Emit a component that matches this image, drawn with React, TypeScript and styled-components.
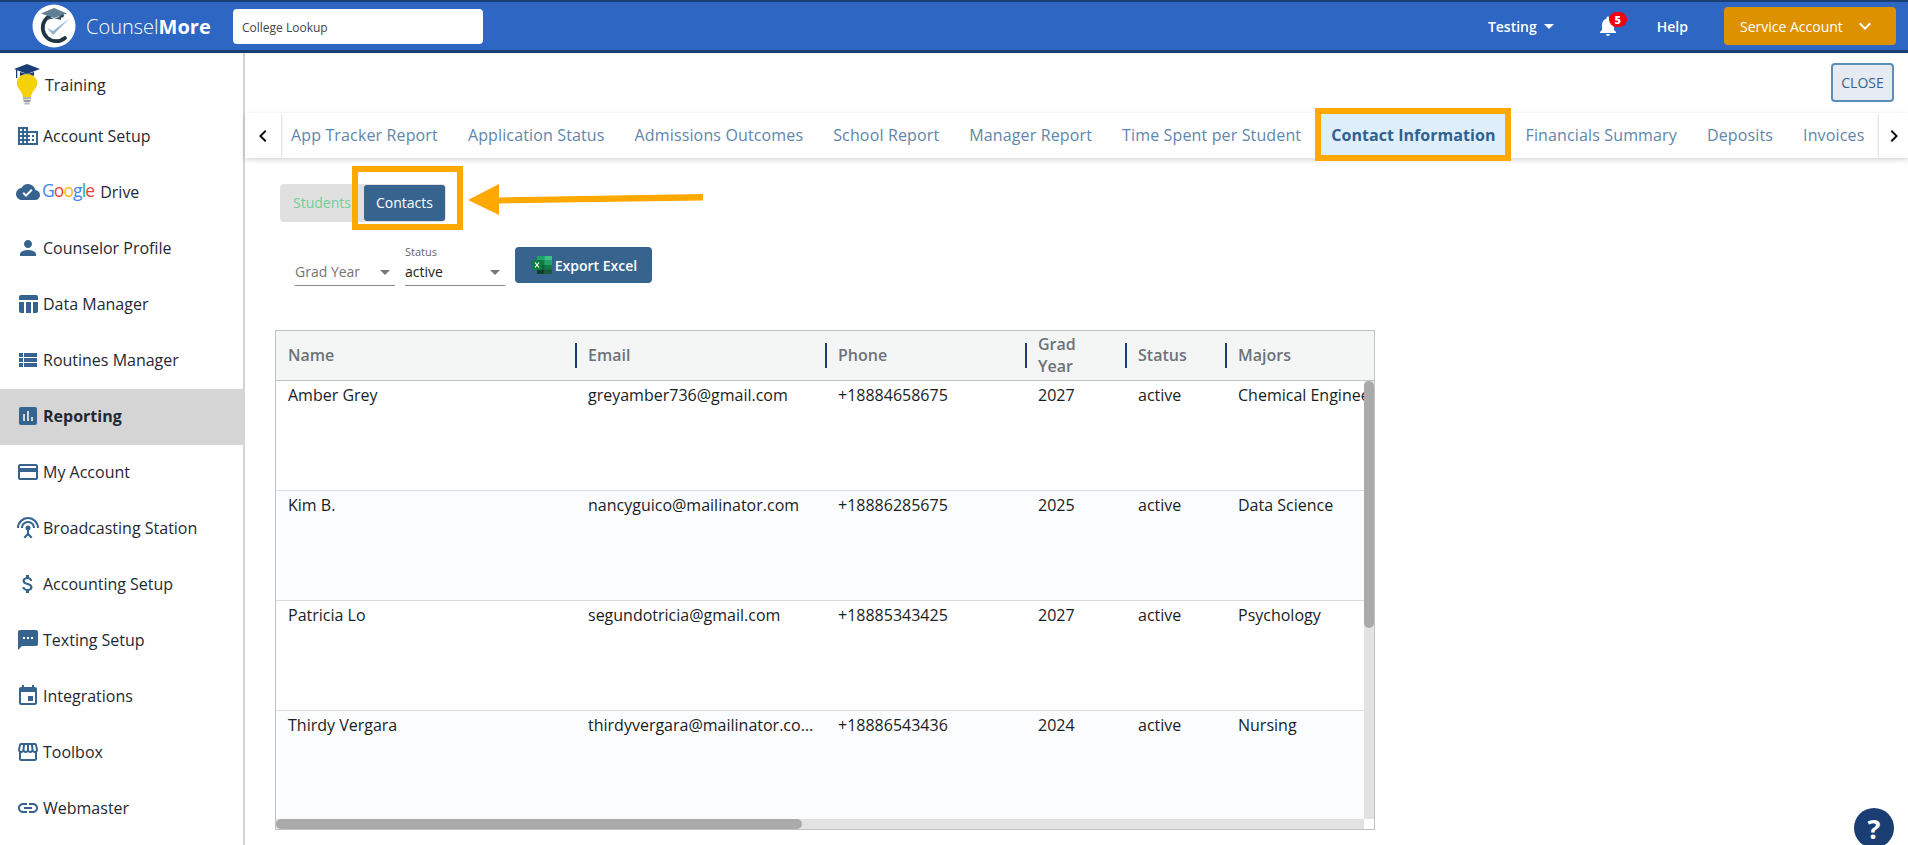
import React from "react";
import styled, { createGlobalStyle } from "styled-components";
import {
  MdDomain, MdCloudDone, MdPerson, MdTableChart, MdViewList, MdAssessment, MdPayment,
  MdSettingsInputAntenna, MdAttachMoney, MdSms, MdEvent, MdStorefront, MdLink,
  MdNotifications, MdChevronLeft, MdChevronRight, MdKeyboardArrowDown,
} from "react-icons/md";

const Global = createGlobalStyle`
  html, body { margin: 0; padding: 0; height: 100%; background: #fff; overflow: hidden; }
  body { font-family: "Open Sans", "Liberation Sans", sans-serif; }
  * { box-sizing: border-box; }
`;

const Page = styled.div`
  width: 1908px; height: 845px; display: flex; flex-direction: column; overflow: hidden; position: relative;
`;
const Header = styled.header`
  height: 53px; flex: none; display: flex; align-items: center; background: #2d66c3;
  border-top: 2px solid #1a3e73; border-bottom: 3px solid #1a3e73; color: #fff; padding: 0 12px 0 33px;
`;
const LogoSvg = styled.svg`width: 44px; height: 44px; flex: none; margin-left: -1px;`;
const Brand = styled.div`
  font-size: 20px; font-weight: 300; margin-left: 10px; width: 147px; flex: none;
  b { font-weight: 700; }
`;
const Search = styled.div`
  width: 250px; height: 35px; background: #fff; border-radius: 4px; color: #444; font-size: 12px;
  display: flex; align-items: center; padding: 3px 9px 0;
`;
const RightNav = styled.div`display: flex; align-items: center; margin-left: auto; font-size: 14px; font-weight: 600;`;
const Testing = styled.div`display: flex; align-items: center; gap: 7px;`;
const Caret = styled.span<{ $c?: string; $w?: number }>`
  width: 0; height: 0; border-left: ${p => p.$w ?? 5}px solid transparent; border-right: ${p => p.$w ?? 5}px solid transparent;
  border-top: ${p => p.$w ?? 5}px solid ${p => p.$c ?? "#fff"};
`;
const BellWrap = styled.div`position: relative; display: flex; margin-left: 42px; margin-right: 37px; font-size: 24px;`;
const Badge = styled.span`
  position: absolute; top: -2px; right: -7px; width: 18px; height: 15px; border-radius: 8px; background: #f5000f;
  color: #fff; font-size: 11px; font-weight: 800; display: flex; align-items: center; justify-content: center;
`;
const Help = styled.div`margin-right: 36px;`;
const AccountBtn = styled.div`
  width: 172px; height: 38px; background: #dd9000; border-radius: 4px; display: flex; align-items: center;
  padding-left: 16px; gap: 10px; font-size: 14px; font-weight: 500; svg { font-size: 24px; }
`;

const Body = styled.div`flex: 1; display: flex; min-height: 0;`;
const Sidebar = styled.nav`width: 245px; flex: none; border-right: 2px solid #d4d4d4;`;
const NavItem = styled.div<{ $active?: boolean; $top?: number }>`
  height: 56px; display: flex; align-items: center; padding: ${p => p.$top ?? 0}px 0 ${p => (p.$top ? 0 : 2)}px 16px; gap: 3px;
  font-size: 16px; color: #1f2933; font-weight: ${p => (p.$active ? 700 : 400)};
  background: ${p => (p.$active ? "#d5d5d5" : "transparent")};
  margin-right: ${p => (p.$active ? "-2px" : "0")};
  svg.ic { font-size: 24px; color: #36648f; flex: none; }
`;
const BulbSvg = styled.svg`width: 28px; height: 42px; flex: none; margin: -2px 1px 0 -3px;`;
const GoogleWord = styled.span`
  font-size: 17.5px; letter-spacing: -0.9px; margin: -5px 3px 0 -1px; font-weight: 500;
`;
const Letter = styled.span<{ $c: string }>`color: ${p => p.$c};`;

const Main = styled.main`flex: 1; min-width: 0; display: flex; flex-direction: column;`;
const CloseRow = styled.div`height: 60px; flex: none; display: flex; justify-content: flex-end; padding: 10px 14px 0 0;`;
const CloseBtn = styled.div`
  width: 63px; height: 39px; border: 2px solid #5b8fb5; border-radius: 4px; background: #e6eaf2; color: #36648f;
  font-size: 14px; display: flex; align-items: center; justify-content: center;
`;
const TabBar = styled.div`
  height: 45px; flex: none; display: flex; align-items: stretch; box-shadow: 0 2px 5px rgba(0,0,0,.16); background: #fff;
`;
const Arrow = styled.div<{ $side: "l" | "r" }>`
  width: ${p => (p.$side === "l" ? "36px" : "29px")}; flex: none; display: flex; align-items: center; justify-content: center;
  font-size: 24px; color: #111; margin-left: ${p => (p.$side === "r" ? "auto" : "0")};
  box-shadow: ${p => (p.$side === "l" ? "2px 0 2px -1px rgba(0,0,0,.14)" : "-2px 0 2px -1px rgba(0,0,0,.14)")};
`;
const Tabs = styled.div`display: flex; align-items: stretch; margin-left: -5px;`;
const Tab = styled.div<{ $active?: boolean }>`
  padding: 0 15px 2px; display: flex; align-items: center; position: relative; white-space: nowrap; font-size: 16px;
  letter-spacing: ${p => (p.$active ? "0.05px" : "0.14px")};
  color: ${p => (p.$active ? "#2f6190" : "#5f86ab")}; font-weight: ${p => (p.$active ? 700 : 400)};
  background: ${p => (p.$active ? "#deeffb" : "transparent")};
  ${p => p.$active && `
    &::after { content: ""; position: absolute; top: -5px; bottom: -3px; left: -1px; right: 0; border: 6px solid #ffa800; }
  `}
`;
const Content = styled.div`padding: 26px 0 0 30px; flex: 1; min-height: 0; display: flex; flex-direction: column;`;
const SegmentWrap = styled.div`position: relative; margin-left: 5px; width: 166px;`;
const Segment = styled.div`
  height: 38px; width: 166px; background: #e0e0e0; border-radius: 4px; display: flex; align-items: center; padding-left: 13px;
`;
const Students = styled.div`color: #6fcf97; font-size: 14px; width: 71px; padding-bottom: 2px;`;
const Contacts = styled.div`
  width: 81px; height: 36px; background: #36648f; color: #fff; border-radius: 3px; font-size: 14px; position: relative; padding-bottom: 2px;
  display: flex; align-items: center; justify-content: center;
  &::after { content: ""; position: absolute; top: -19px; left: -12px; right: -18px; bottom: -9px; border: 6px solid #ffa800; }
`;
const ArrowSvg = styled.svg`position: absolute; left: 188px; top: 0; width: 235px; height: 32px;`;
const Filters = styled.div`display: flex; gap: 10px; margin: 25px 0 0 20px; align-items: flex-start; height: 83px;`;
const Select = styled.div`
  width: 100px; height: 39px; border-bottom: 1px solid #8a8a8a; display: flex; flex-direction: column; justify-content: flex-end; padding-bottom: 3px;
`;
const SelLabel = styled.div`font-size: 11px; color: #666; line-height: 14px; margin-bottom: 3px; margin-top: -3px;`;
const SelValue = styled.div<{ $muted?: boolean }>`
  font-size: 14px; line-height: 20px; color: ${p => (p.$muted ? "#757575" : "#222")};
  display: flex; align-items: center; justify-content: space-between; padding-right: 5px;
`;
const ExportBtn = styled.div`
  width: 137px; height: 36px; background: #36648f; border-radius: 4px; color: #fff; font-size: 14px; font-weight: 600;
  display: flex; align-items: center; justify-content: center; gap: 3px; padding-left: 2px;
`;
const Table = styled.div`
  width: 1100px; height: 500px; border: 1px solid #bdc3c7; display: flex; flex-direction: column; flex: none;
`;
const cols = "300px 250px 200px 100px 100px 1fr";
const HeadRow = styled.div`
  height: 50px; flex: none; display: grid; grid-template-columns: ${cols}; background: #f4f6f6; border-bottom: 1px solid #bdc3c7;
`;
const HeadCell = styled.div<{ $sep?: boolean }>`
  position: relative; display: flex; align-items: center; padding: 0 0 1px 12px; font-size: 16px; font-weight: 600; color: #6d7278; line-height: 22px;
  ${p => p.$sep && `&::before { content: ""; position: absolute; left: -1px; top: 12px; height: 25px; width: 1.5px; background: #1a3e73; }`}
`;
const Wrap = styled.span`width: min-content;`;
const BodyArea = styled.div`flex: 1; min-height: 0; display: flex;`;
const Rows = styled.div`flex: 1; min-width: 0; overflow: hidden;`;
const Row = styled.div<{ $alt?: boolean }>`
  height: 110px; display: grid; grid-template-columns: ${cols}; border-bottom: 1px solid #d9dcde;
  background: ${p => (p.$alt ? "#fbfcfe" : "#fff")}; font-size: 16px; color: #181d1f; line-height: 28px; width: 1089px;
`;
const Cell = styled.div`padding: 0 12px; overflow: hidden; white-space: nowrap; text-overflow: ellipsis;`;
const ClipCell = styled(Cell)`text-overflow: clip; padding-right: 0;`;
const VTrack = styled.div`width: 10px; flex: none; background: #e2e2e2;`;
const VThumb = styled.div`height: 247px; background: #aaa; border-radius: 5px;`;
const HBar = styled.div`height: 10px; flex: none; display: flex;`;
const HTrack = styled.div`flex: 1; background: #e2e2e2;`;
const HThumb = styled.div`width: 526px; height: 100%; background: #aaa; border-radius: 5px;`;
const Corner = styled.div`width: 10px; background: #fff;`;
const HelpFab = styled.div`
  position: absolute; left: 1854px; top: 808px; width: 40px; height: 40px; border-radius: 50%; background: #1a3e73; color: #fff;
  font-size: 27px; font-weight: 700; display: flex; align-items: center; justify-content: center;
`;

const Logo = () => (
  <LogoSvg viewBox="0 0 44 44">
    <circle cx="22" cy="22" r="21.5" fill="#fff" />
    <path d="M33 34 A13.5 13.5 0 1 1 30 11.5" fill="none" stroke="#1e3641" strokeWidth="3.8" strokeLinecap="round" />
    <path d="M9 9.5 L22 4 L35 9.5 L22 14 Z" fill="#5f7f93" />
    <path d="M15 12.5 V16 Q22 13 29 16 V12.5 L22 14.5 Z" fill="#31515f" />
    <path d="M15 24 L21 31 L38 14 L21 27 Z" fill="#8fb3cf" />
  </LogoSvg>
);
const Bulb = () => (
  <BulbSvg viewBox="0 0 28 42">
    <path d="M14 11 C6 11 3 17 4 22 C5 26 9 28 10 34 H18 C19 28 23 26 24 22 C25 17 22 11 14 11 Z" fill="#f4d10a" />
    <rect x="10" y="34" width="8" height="2.5" fill="#b5b5b5" />
    <rect x="10.5" y="37" width="7" height="2" fill="#9b9b9b" />
    <rect x="11.5" y="39.5" width="5" height="2" fill="#b5b5b5" />
    <path d="M1 6 L14 1 L27 6 L14 11 Z" fill="#1a3e73" />
    <path d="M7 9 V13 Q14 9 21 13 V9 L14 11 Z" fill="#1a3e73" />
    <rect x="3" y="7" width="1.3" height="8" fill="#1a3e73" />
  </BulbSvg>
);
const ExcelIcon = () => (
  <svg width="20" height="18" viewBox="0 0 20 18">
    <rect x="5" y="0" width="7.5" height="4.5" fill="#21a366" />
    <rect x="12.5" y="0" width="7.5" height="4.5" fill="#33c481" />
    <rect x="5" y="4.5" width="7.5" height="4.5" fill="#107c41" />
    <rect x="12.5" y="4.5" width="7.5" height="4.5" fill="#21a366" />
    <rect x="5" y="9" width="7.5" height="4.5" fill="#185c37" />
    <rect x="12.5" y="9" width="7.5" height="4.5" fill="#107c41" />
    <rect x="5" y="13.5" width="7.5" height="4.5" fill="#0e3f27" />
    <rect x="12.5" y="13.5" width="7.5" height="4.5" fill="#185c37" />
    <rect x="0" y="4" width="10" height="10" rx="1" fill="#107c41" />
    <path d="M3 6.5 L7 11.5 M7 6.5 L3 11.5" stroke="#fff" strokeWidth="1.2" />
  </svg>
);

const navItems: [React.ComponentType<{ className?: string }>, string][] = [
  [MdPerson, "Counselor Profile"],
  [MdTableChart, "Data Manager"],
  [MdViewList, "Routines Manager"],
  [MdAssessment, "Reporting"],
  [MdPayment, "My Account"],
  [MdSettingsInputAntenna, "Broadcasting Station"],
  [MdAttachMoney, "Accounting Setup"],
  [MdSms, "Texting Setup"],
  [MdEvent, "Integrations"],
  [MdStorefront, "Toolbox"],
  [MdLink, "Webmaster"],
];
const tabs = ["App Tracker Report", "Application Status", "Admissions Outcomes", "School Report", "Manager Report", "Time Spent per Student", "Contact Information", "Financials Summary", "Deposits", "Invoices"];
const data = [
  ["Amber Grey", "greyamber736@gmail.com", "+18884658675", "2027", "active", "Chemical Engineering"],
  ["Kim B.", "nancyguico@mailinator.com", "+18886285675", "2025", "active", "Data Science"],
  ["Patricia Lo", "segundotricia@gmail.com", "+18885343425", "2027", "active", "Psychology"],
  ["Thirdy Vergara", "thirdyvergara@mailinator.com", "+18886543436", "2024", "active", "Nursing"],
];

export default function App() {
  return (
    <Page>
      <Global />
      <Header>
        <Logo />
        <Brand>Counsel<b>More</b></Brand>
        <Search>College Lookup</Search>
        <RightNav>
          <Testing>Testing <Caret /></Testing>
          <BellWrap><MdNotifications /><Badge>5</Badge></BellWrap>
          <Help>Help</Help>
          <AccountBtn>Service Account <MdKeyboardArrowDown /></AccountBtn>
        </RightNav>
      </Header>
      <Body>
        <Sidebar>
          <NavItem $top={8}><Bulb />Training</NavItem>
          <NavItem><MdDomain className="ic" />Account Setup</NavItem>
          <NavItem>
            <MdCloudDone className="ic" />
            <GoogleWord>
              <Letter $c="#4285f4">G</Letter><Letter $c="#ea4335">o</Letter><Letter $c="#fbbc05">o</Letter>
              <Letter $c="#4285f4">g</Letter><Letter $c="#34a853">l</Letter><Letter $c="#ea4335">e</Letter>
            </GoogleWord>
            Drive
          </NavItem>
          {navItems.map(([Icon, label]) => (
            <NavItem key={label} $active={label === "Reporting"}><Icon className="ic" />{label}</NavItem>
          ))}
        </Sidebar>
        <Main>
          <CloseRow><CloseBtn>CLOSE</CloseBtn></CloseRow>
          <TabBar>
            <Arrow $side="l"><MdChevronLeft /></Arrow>
            <Tabs>
              {tabs.map(t => <Tab key={t} $active={t === "Contact Information"}>{t}</Tab>)}
            </Tabs>
            <Arrow $side="r"><MdChevronRight /></Arrow>
          </TabBar>
          <Content>
            <SegmentWrap>
              <Segment>
                <Students>Students</Students>
                <Contacts>Contacts</Contacts>
              </Segment>
              <ArrowSvg viewBox="0 0 235 32">
                <path d="M0 16 L31 0 V13.5 L235 10 V16.5 L31 19.5 V31 Z" fill="#ffa800" />
              </ArrowSvg>
            </SegmentWrap>
            <Filters>
              <Select>
                <SelValue $muted>Grad Year <Caret $c="#777" /></SelValue>
              </Select>
              <Select>
                <SelLabel>Status</SelLabel>
                <SelValue>active <Caret $c="#777" /></SelValue>
              </Select>
              <ExportBtn><ExcelIcon />Export Excel</ExportBtn>
            </Filters>
            <Table>
              <HeadRow>
                <HeadCell>Name</HeadCell>
                <HeadCell $sep>Email</HeadCell>
                <HeadCell $sep>Phone</HeadCell>
                <HeadCell $sep><Wrap>Grad Year</Wrap></HeadCell>
                <HeadCell $sep>Status</HeadCell>
                <HeadCell $sep>Majors</HeadCell>
              </HeadRow>
              <BodyArea>
                <Rows>
                  {data.map((r, i) => (
                    <Row key={r[0]} $alt={i % 2 === 1}>
                      <Cell>{r[0]}</Cell><Cell>{r[1]}</Cell><Cell>{r[2]}</Cell><Cell>{r[3]}</Cell><Cell>{r[4]}</Cell>
                      <ClipCell>{r[5]}</ClipCell>
                    </Row>
                  ))}
                </Rows>
                <VTrack><VThumb /></VTrack>
              </BodyArea>
              <HBar><HTrack><HThumb /></HTrack><Corner /></HBar>
            </Table>
          </Content>
        </Main>
      </Body>
      <HelpFab>?</HelpFab>
    </Page>
  );
}
